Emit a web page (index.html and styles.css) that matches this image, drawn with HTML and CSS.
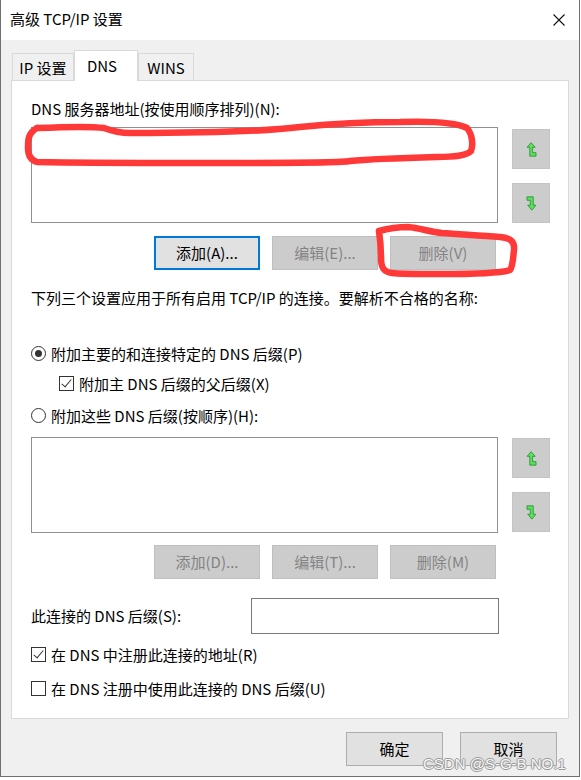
FILE: index.html
```html
<!DOCTYPE html>
<html lang="zh-CN">
<head>
  <meta charset="UTF-8" />
  <title>高级 TCP/IP 设置</title>
  <link rel="stylesheet" href="styles.css">
</head>
<body>
  <div class="window">
    <div class="titlebar">
      <span class="title">高级 TCP/IP 设置</span>
      <svg class="close" width="12" height="12" viewBox="0 0 12 12">
        <path d="M0.5 0.5 L11.5 11.5 M11.5 0.5 L0.5 11.5" stroke="#111" stroke-width="1.1" fill="none"/>
      </svg>
    </div>

    <div class="client">
      <div class="tabs">
        <div class="tab tab-ip">IP 设置</div>
        <div class="tab tab-dns active">DNS</div>
        <div class="tab tab-wins">WINS</div>
      </div>

      <div class="panel">
        <div class="text first">DNS 服务器地址(按使用顺序排列)(N):</div>
        <div class="list-row">
          <div class="listbox"></div>
          <div class="arrows">
            <div class="arrow-btn">
              <svg width="11" height="15" viewBox="0 0 10 14"><path d="M4.6 0.6 L8.4 5 L6 5 L6 10 L9.2 10 L9.2 13.2 L3.4 13.2 L3.4 5 L0.9 5 Z" fill="#5ee05e" stroke="#2e9b3a" stroke-width="0.9" stroke-linejoin="round"/></svg>
            </div>
            <div class="arrow-btn">
              <svg width="11" height="15" viewBox="0 0 10 14"><path d="M0.8 0.8 L6.6 0.8 L6.6 8.6 L9.1 8.6 L5.3 13.2 L1.5 8.6 L3.9 8.6 L3.9 4 L0.8 4 Z" fill="#5ee05e" stroke="#2e9b3a" stroke-width="0.9" stroke-linejoin="round"/></svg>
            </div>
          </div>
        </div>
        <div class="btn-row">
          <div class="btn btn-default">添加(A)...</div>
          <div class="btn disabled">编辑(E)...</div>
          <div class="btn disabled">删除(V)</div>
        </div>

        <div class="text desc">下列三个设置应用于所有启用 TCP/IP 的连接。要解析不合格的名称:</div>

        <div class="option opt-primary"><span class="radio checked"></span>附加主要的和连接特定的 DNS 后缀(P)</div>
        <div class="option opt-parent"><span class="check checked"></span>附加主 DNS 后缀的父后缀(X)</div>
        <div class="option opt-custom"><span class="radio"></span>附加这些 DNS 后缀(按顺序)(H):</div>

        <div class="list-row list-second">
          <div class="listbox"></div>
          <div class="arrows">
            <div class="arrow-btn">
              <svg width="11" height="15" viewBox="0 0 10 14"><path d="M4.6 0.6 L8.4 5 L6 5 L6 10 L9.2 10 L9.2 13.2 L3.4 13.2 L3.4 5 L0.9 5 Z" fill="#5ee05e" stroke="#2e9b3a" stroke-width="0.9" stroke-linejoin="round"/></svg>
            </div>
            <div class="arrow-btn">
              <svg width="11" height="15" viewBox="0 0 10 14"><path d="M0.8 0.8 L6.6 0.8 L6.6 8.6 L9.1 8.6 L5.3 13.2 L1.5 8.6 L3.9 8.6 L3.9 4 L0.8 4 Z" fill="#5ee05e" stroke="#2e9b3a" stroke-width="0.9" stroke-linejoin="round"/></svg>
            </div>
          </div>
        </div>
        <div class="btn-row btn-row-second">
          <div class="btn disabled">添加(D)...</div>
          <div class="btn disabled">编辑(T)...</div>
          <div class="btn disabled">删除(M)</div>
        </div>

        <div class="suffix-row">
          <span class="suffix-label">此连接的 DNS 后缀(S):</span>
          <div class="input"></div>
        </div>

        <div class="option opt-register"><span class="check checked"></span>在 DNS 中注册此连接的地址(R)</div>
        <div class="option opt-suffix"><span class="check"></span>在 DNS 注册中使用此连接的 DNS 后缀(U)</div>
      </div>

      <div class="footer">
        <div class="btn btn-ok">确定</div>
        <div class="btn btn-ok">取消</div>
      </div>
    </div>

    <!-- red marks drawn over the screenshot -->
    <svg class="marks" width="581" height="780" viewBox="0 0 581 780">
      <path d="M37 128 C60 127 90 126 104 128 C112 131 118 133 130 133 C200 133 260 132 300 127 C330 124 370 122 400 122 C430 121 455 122 467 128 C473 135 473 146 471 151 C466 156 455 157 437 157 C400 158 370 159 350 161 C340 163 300 163 220 163 C150 163 80 163 37 162 C30 160 28 155 28 148 C28 140 28 133 37 128"
            fill="none" stroke="#ff3838" stroke-width="6.5" stroke-linecap="round" stroke-linejoin="round"/>
      <path d="M379 231 C390 228 400 227 408 227 C420 228 430 232 442 233 C460 234 480 236 500 237 C510 238 515 241 514 250 C513 258 513 266 510 270 C500 273 470 274 440 274 C420 274 400 274 392 273 C384 272 381 268 381 258 C381 248 380 238 379 231"
            fill="none" stroke="#ff3838" stroke-width="6.5" stroke-linecap="round" stroke-linejoin="round"/>
    </svg>

    <div class="watermark">CSDN @S-G-B NO.1</div>
  </div>
</body>
</html>
```

FILE: styles.css
```css
body {
  margin: 0;
  background-color: #ffffff;
  font-family: "Noto Sans CJK SC", "Noto Sans", sans-serif;
  font-size: 15px;
  color: #000;
}

.window {
  position: relative;
  width: 580px;
  height: 777px;
  box-sizing: border-box;
  border: 1px solid #707070;
  border-top: none;
  display: flex;
  flex-direction: column;
  overflow: hidden;
}

.titlebar {
  height: 40px;
  flex-shrink: 0;
  background-color: #ffffff;
  display: flex;
  align-items: center;
  justify-content: space-between;
  padding: 0 14px 0 9px;
}

.title {
  line-height: 20px;
  margin-top: -2px;
}

.client {
  flex: 1;
  background-color: #f0f0f0;
  padding: 10px 10px 0 10px;
}

/* tabs */
.tabs {
  display: flex;
  align-items: flex-end;
  height: 31px;
  padding-left: 1px;
  margin-bottom: -1px;
  position: relative;
  z-index: 1;
}

.tab {
  box-sizing: border-box;
  height: 27px;
  margin-bottom: 1px;
  border: 1px solid #d9d9d9;
  border-bottom: none;
  background-color: #f0f0f0;
  display: flex;
  align-items: center;
  justify-content: center;
  padding-top: 2px;
  line-height: 20px;
}

.tab-ip {
  width: 62px;
}

.tab-dns {
  width: 64px;
  margin-left: 0;
}

.tab-wins {
  width: 56px;
}

.tab.active {
  height: 31px;
  margin-bottom: 0;
  background-color: #ffffff;
  padding-top: 0;
  padding-right: 8px;
}

.panel {
  box-sizing: border-box;
  height: 639px;
  background-color: #ffffff;
  border: 1px solid #d9d9d9;
  padding: 0 18px 0 19px;
}

.text {
  line-height: 20px;
  white-space: nowrap;
}

.first {
  margin-top: 18px;
}

.desc {
  margin-top: 18px;
}

.list-row {
  display: flex;
  gap: 14px;
  margin-top: 8px;
}

.list-second {
  margin-top: 12px;
}

.listbox {
  box-sizing: border-box;
  width: 468px;
  height: 96px;
  border: 1px solid #909090;
  background-color: #ffffff;
}

.arrows {
  display: flex;
  flex-direction: column;
  gap: 14px;
  padding-top: 2px;
}

.list-second .arrows {
  padding-top: 1px;
}

.arrow-btn {
  box-sizing: border-box;
  width: 38px;
  height: 40px;
  background-color: #cccccc;
  border: 1px solid #c4c4c4;
  display: flex;
  align-items: center;
  justify-content: center;
}

.btn-row {
  display: flex;
  gap: 12px;
  margin-top: 13px;
  padding-left: 123px;
}

.btn-row-second {
  margin-top: 12px;
}

.btn {
  box-sizing: border-box;
  width: 106px;
  height: 34px;
  display: flex;
  align-items: center;
  justify-content: center;
  background-color: #e1e1e1;
  border: 1px solid #adadad;
  line-height: 20px;
  padding-bottom: 1px;
}

.btn-default {
  border: 2px solid #0078d7;
}

.btn.disabled {
  background-color: #cccccc;
  border-color: #bfbfbf;
  color: #838383;
}

/* radios and checkboxes */
.option {
  display: flex;
  align-items: center;
  gap: 5px;
  height: 20px;
  white-space: nowrap;
}

.opt-primary {
  margin-top: 35px;
}

.opt-parent {
  margin-top: 10px;
  padding-left: 28px;
}

.opt-custom {
  margin-top: 12px;
}

.opt-register {
  margin-top: 10px;
}

.opt-suffix {
  margin-top: 14px;
}

.radio {
  box-sizing: border-box;
  width: 15px;
  height: 15px;
  border: 1px solid #333333;
  border-radius: 50%;
  background-color: #ffffff;
  display: flex;
  align-items: center;
  justify-content: center;
  flex-shrink: 0;
}

.radio.checked::after {
  content: "";
  width: 7px;
  height: 7px;
  border-radius: 50%;
  background-color: #333333;
}

.check {
  position: relative;
  box-sizing: border-box;
  width: 15px;
  height: 15px;
  border: 1px solid #333333;
  background-color: #ffffff;
  flex-shrink: 0;
}

.check.checked::after {
  content: "";
  position: absolute;
  left: 4px;
  top: 0px;
  width: 4px;
  height: 9px;
  border-right: 1px solid #333333;
  border-bottom: 1px solid #333333;
  transform: rotate(40deg);
}

.suffix-row {
  display: flex;
  align-items: center;
  height: 36px;
  margin-top: 19px;
}

.suffix-label {
  width: 220px;
  line-height: 20px;
  white-space: nowrap;
}

.input {
  box-sizing: border-box;
  width: 248px;
  height: 36px;
  border: 1px solid #7a7a7a;
  background-color: #ffffff;
}

.footer {
  display: flex;
  justify-content: flex-end;
  gap: 17px;
  margin-top: 13px;
  padding-right: 12px;
}

.btn-ok {
  width: 97px;
}

.marks {
  position: absolute;
  left: -1px;
  top: 0;
  pointer-events: none;
}

.watermark {
  position: absolute;
  left: 422px;
  top: 754px;
  font-family: "Liberation Sans", sans-serif;
  font-size: 15px;
  line-height: 20px;
  color: #f6f6f6;
  text-shadow: 1px 0 #9a9a9a, -1px 0 #9a9a9a, 0 1px #9a9a9a, 0 -1px #9a9a9a;
  white-space: nowrap;
}
```
